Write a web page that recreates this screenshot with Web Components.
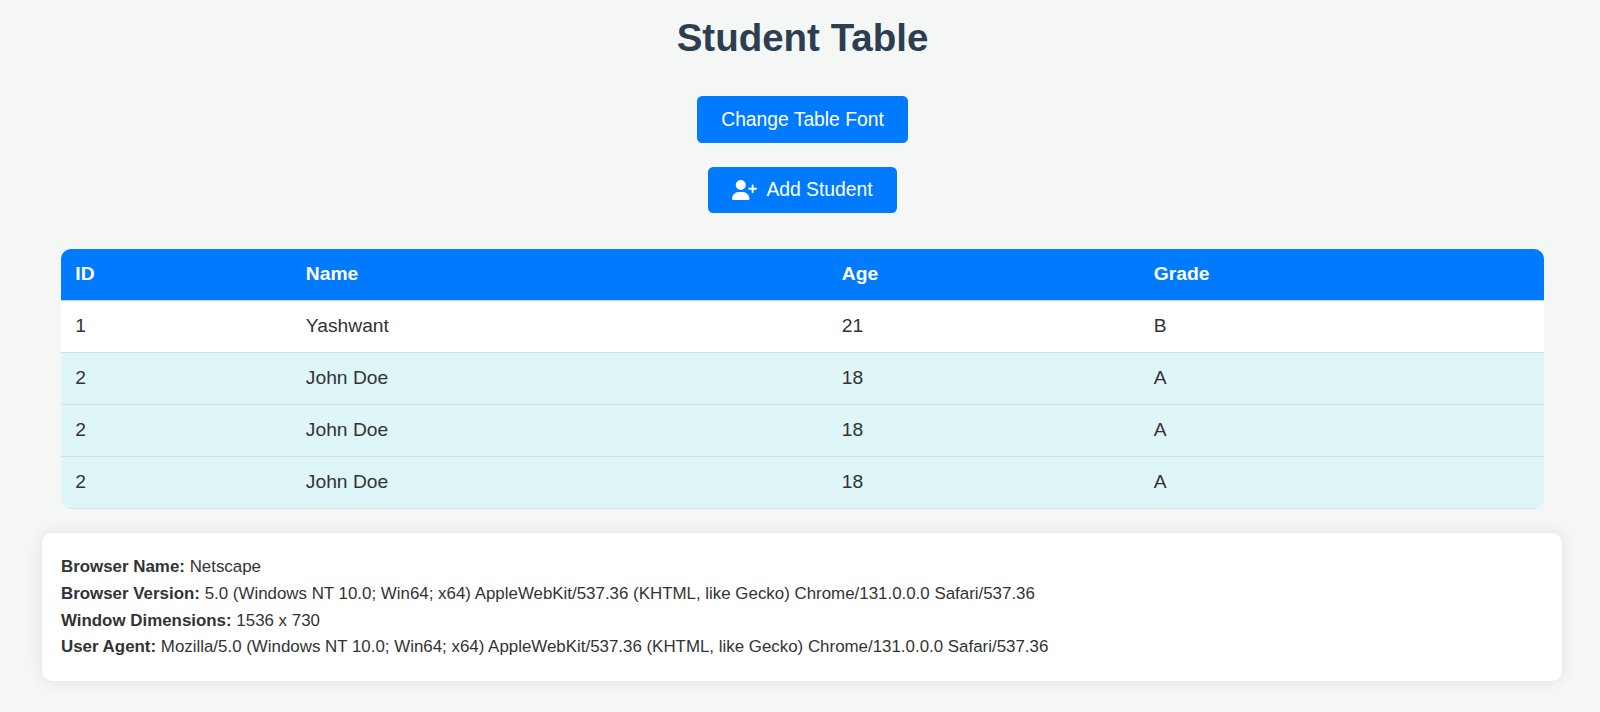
<!DOCTYPE html>
<html lang="en">
<head>
<meta charset="utf-8">
<title>Student Table</title>
<style>
html, body { margin: 0; background: #f4f7f6; }
body { font-family: "Liberation Sans", Arial, sans-serif; color: #333; }
</style>
</head>
<body>
<student-page></student-page>
<script>
class ActionButton extends HTMLElement {
  constructor() {
    super();
    this.attachShadow({ mode: 'open' }).innerHTML = `
      <style>
        :host { display: block; }
        button { display: flex; align-items: center; height: var(--button-height, 46px); padding: 0 24px; border: 0; border-radius: 5.2px;
          background: #007bff; color: #fff; font: 19.3px/22px "Liberation Sans", Arial, sans-serif; white-space: nowrap; }
        ::slotted(svg) { width: 25px; height: 20px; margin-right: 9px; fill: #fff; }
      </style>
      <button><slot name="icon"></slot><span><slot></slot></span></button>`;
  }
}
customElements.define('action-button', ActionButton);

class StudentGrid extends HTMLElement {
  constructor() {
    super();
    const rows = [[1, 'Yashwant', 21, 'B'], [2, 'John Doe', 18, 'A'], [2, 'John Doe', 18, 'A'], [2, 'John Doe', 18, 'A']];
    this.attachShadow({ mode: 'open' }).innerHTML = `
      <style>
        :host { display: block; width: 1483px; border-radius: 10px; overflow: hidden; }
        table { width: 100%; table-layout: fixed; border-collapse: separate; border-spacing: 0; font-size: 19.25px; line-height: 22px; }
        th, td { box-sizing: border-box; height: 52px; padding: 0 14.3px; text-align: left; border-bottom: 1px solid #d5e0e2; }
        th { background: #007bff; color: #fff; border-bottom-color: #b9dafc; }
        td { background: #fff; }
        tr.alt td { background: #def6f8; }
      </style>
      <table>
        <colgroup><col style="width:230.5px"><col style="width:536px"><col style="width:312px"><col></colgroup>
        <thead><tr><th>ID</th><th>Name</th><th>Age</th><th>Grade</th></tr></thead>
        <tbody>${rows.map((r, i) => `<tr class="${i ? 'alt' : ''}">${r.map(c => `<td>${c}</td>`).join('')}</tr>`).join('')}</tbody>
      </table>`;
  }
}
customElements.define('student-grid', StudentGrid);

class InfoLine extends HTMLElement {
  constructor() {
    super();
    this.attachShadow({ mode: 'open' }).innerHTML = `
      <style>:host { display: block; white-space: nowrap; } b { font-weight: 700; }</style>
      <b>${this.getAttribute('label')}:</b> <slot></slot>`;
  }
}
customElements.define('info-line', InfoLine);

class InfoCard extends HTMLElement {
  constructor() {
    super();
    this.attachShadow({ mode: 'open' }).innerHTML = `
      <style>
        :host { display: block; box-sizing: border-box; width: 1520px; height: 148px; padding: 21px 19px;
          border-radius: 10px; background: #fff; box-shadow: 0 0 16px rgba(0,0,0,.09); font-size: 16.9px; line-height: 26.6px; }
      </style><slot></slot>`;
  }
}
customElements.define('info-card', InfoCard);

class StudentPage extends HTMLElement {
  constructor() {
    super();
    this.attachShadow({ mode: 'open' }).innerHTML = `
      <style>
        :host { display: flex; flex-direction: column; align-items: center; box-sizing: border-box; width: 1605px; height: 712px; padding-top: 14px; margin-right: -5px; overflow: hidden; }
        h1 { margin: 0 0 34.4px; color: #2c3e50; font-size: 38.5px; line-height: 48px; }
        .first { --button-height: 46.6px; margin-bottom: 24px; }
        student-grid { margin: 36px 0 24.4px; }
        info-card { margin-right: 1px; }
      </style>
      <h1>Student Table</h1>
      <action-button class="first">Change Table Font</action-button>
      <action-button><svg slot="icon" viewBox="0 0 640 512"><path d="M96 128a128 128 0 1 1 256 0A128 128 0 1 1 96 128zM0 482.3C0 383.8 79.8 304 178.3 304l91.4 0C368.2 304 448 383.8 448 482.3c0 16.4-13.3 29.7-29.7 29.7L29.7 512C13.3 512 0 498.7 0 482.3zM504 312l0-64-64 0c-13.3 0-24-10.7-24-24s10.7-24 24-24l64 0 0-64c0-13.3 10.7-24 24-24s24 10.7 24 24l0 64 64 0c13.3 0 24 10.7 24 24s-10.7 24-24 24l-64 0 0 64c0 13.3-10.7 24-24 24s-24-10.7-24-24z"/></svg>Add Student</action-button>
      <student-grid></student-grid>
      <info-card>
        <info-line label="Browser Name">Netscape</info-line>
        <info-line label="Browser Version">5.0 (Windows NT 10.0; Win64; x64) AppleWebKit/537.36 (KHTML, like Gecko) Chrome/131.0.0.0 Safari/537.36</info-line>
        <info-line label="Window Dimensions">1536 x 730</info-line>
        <info-line label="User Agent">Mozilla/5.0 (Windows NT 10.0; Win64; x64) AppleWebKit/537.36 (KHTML, like Gecko) Chrome/131.0.0.0 Safari/537.36</info-line>
      </info-card>`;
  }
}
customElements.define('student-page', StudentPage);
</script>
</body>
</html>
